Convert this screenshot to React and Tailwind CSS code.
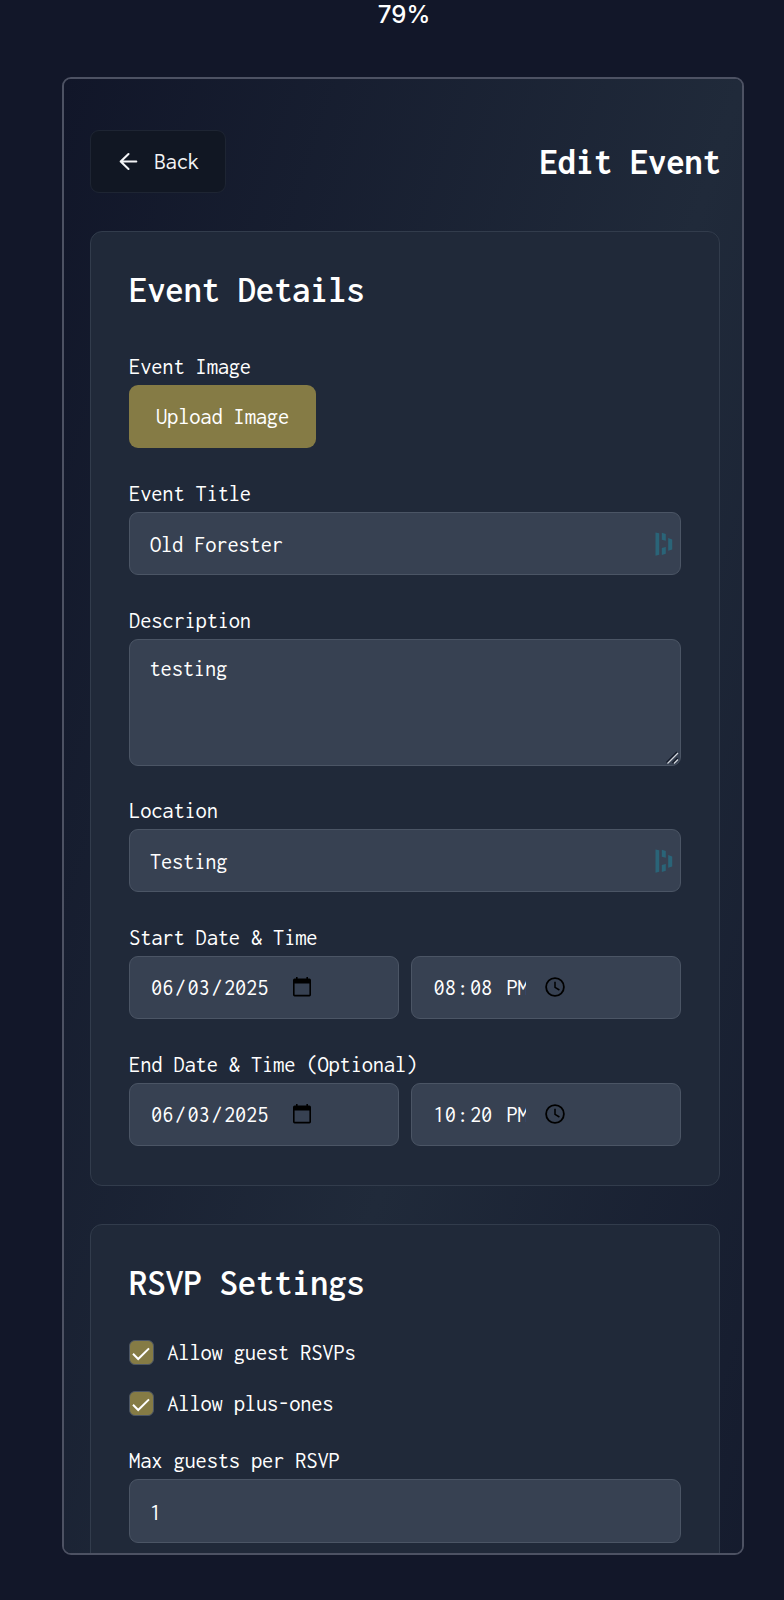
function DashMark() {
  return (
    <svg width="18" height="24" viewBox="0 0 18 24" fill="#2a6478" className="mt-px shrink-0">
      <path d="M.5 .5 4.2 1.2V22.8L.5 23.7Z" />
      <path d="M6.8 .8 10.8 2V8.8L6.8 7.8Z" />
      <path d="M6.8 16 10.8 15V21.8L6.8 23Z" />
      <path d="M13.2 6 17.2 7.4V17.4L13.2 18.8Z" />
    </svg>
  );
}

function CalendarIcon() {
  return (
    <svg width="18" height="20" viewBox="0 0 18 20" className="shrink-0">
      <path d="M1.6 1.6H16.4Q18 1.6 18 3.2V17.8Q18 19.4 16.4 19.4H1.6Q0 19.4 0 17.8V3.2Q0 1.6 1.6 1.6ZM1.6 6.6V17.8H16.4V6.6Z" fill="#000" fillRule="evenodd" />
      <path d="M3 0H4.6V2H3ZM13.4 0H15V2H13.4Z" fill="#000" />
    </svg>
  );
}

function ClockIcon() {
  return (
    <svg width="20" height="20" viewBox="0 0 20 20" fill="none" stroke="#000" className="shrink-0">
      <circle cx="10" cy="10" r="8.9" strokeWidth="1.8" />
      <path d="M10 4.8V10.4L14.4 13" strokeWidth="1.5" />
    </svg>
  );
}

const box = "rounded-[9px] border border-[#4b5565] bg-[#374152]";
const heading = "pl-[0.6px] pt-[39px] text-[36.8px] font-semibold leading-[38px] tracking-[-0.3px]";

function Field({ label, children }) {
  return (
    <div className="flex h-[127px] flex-col">
      <div className="h-[36.5px] shrink-0 pl-[0.6px] pt-[5.5px] font-[425] leading-[25px]">{label}</div>
      {children}
    </div>
  );
}

function TextBox({ value, mark }) {
  return (
    <div className={`${box} flex h-[63.5px] shrink-0 items-center justify-between pl-[20.4px] pr-[7px]`}>
      <span className="pt-[2.5px] leading-[25px]">{value}</span>
      {mark && <DashMark />}
    </div>
  );
}

function DateTime({ date, time }) {
  const [m, d, y] = date;
  const [h, min] = time;
  return (
    <div className="grid grid-cols-2 gap-[12.5px]">
      <div className={`${box} flex h-[63.5px] items-center pl-5`}>
        <div className="w-[143px] pt-px leading-[25px]">
          <span className="px-[1.6px]">{m}</span>/<span className="px-[1.6px]">{d}</span>/<span className="px-[1.6px]">{y}</span>
        </div>
        <CalendarIcon />
      </div>
      <div className={`${box} flex h-[63.5px] items-center pl-5`}>
        <div className="mr-[18.5px] w-[94px] overflow-hidden whitespace-pre pt-px leading-[25px]">
          <span className="px-[1.6px]">{h}</span>:<span className="px-[1.6px]">{min}</span>{" "}<span className="px-[1.6px]">PM</span>
        </div>
        <ClockIcon />
      </div>
    </div>
  );
}

function Check({ label }) {
  return (
    <div className="flex h-[50.7px] items-start gap-[13px]">
      <div className="flex size-[25.3px] shrink-0 items-center justify-center rounded-[6px] border border-[#4b5565] bg-[#857b45]">
        <svg width="18" height="14" viewBox="0 0 18 14" fill="none" stroke="#fff" strokeWidth="2" className="ml-[0.5px] mt-[3px]">
          <path d="M1 6.8 6.2 12 17 1.4" />
        </svg>
      </div>
      <span className="pl-[0.5px] font-[425] leading-[25px]">{label}</span>
    </div>
  );
}

export default function App() {
  return (
    <div className="h-[1600px] overflow-hidden bg-[#121729] font-['Inconsolata','Noto_Sans_Mono',monospace] text-[22.6px] tracking-[-0.22px] text-white">
      <div className="h-[77px] pl-6 text-center font-['Inter',sans-serif] text-[24px] font-medium leading-[29px] tracking-normal">79%</div>
      <div className="ml-[62px] h-[1478px] w-[682px] overflow-hidden rounded-[9px] border-2 border-[#4d5263]">
        <div className="h-[2085px] bg-linear-to-br from-[#111629] via-[#202a3a] to-[#111629] pl-[25.5px] pr-[22px] pt-[51px]">
          <div className="flex h-[101px] items-start justify-between">
            <div className="flex h-[63px] w-[136px] items-center rounded-[9px] border border-[#1e2533] bg-[#111723] pl-[25.5px]">
              <svg width="25" height="25" viewBox="0 0 24 24" fill="none" stroke="#f3f4f6" strokeWidth="2" strokeLinecap="round" strokeLinejoin="round">
                <path d="M19.5 12H4.5M12 4.8 4.5 12l7.5 7.2" />
              </svg>
              <span className="pl-[13.5px] leading-[25px] text-[#f3f4f6]">Back</span>
            </div>
            <div className="-mr-[0.5px] pt-[13px] text-[36.8px] font-bold leading-[38px] tracking-[-0.3px]">Edit Event</div>
          </div>

          <div className="h-[955px] rounded-[12px] border border-[#323c4c] bg-[#202939] px-[38px]">
            <div className={`${heading} h-[116px]`}>Event Details</div>
            <Field label="Event Image">
              <div className="flex h-[63.5px] w-[187px] items-center justify-center rounded-[9px] bg-[#857b45] pl-px pt-px font-[425]">Upload Image</div>
            </Field>
            <Field label="Event Title"><TextBox value="Old Forester" mark /></Field>
            <div className="h-[190px]">
              <Field label="Description">
                <div className={`${box} relative h-[127px] shrink-0 pl-5 pt-[16px] leading-[25px]`}>
                  testing
                  <svg width="13" height="13" viewBox="0 0 13 13" fill="none" className="absolute bottom-px right-px">
                    <path d="M.5 11.5 11 1M6.5 12 11.5 7" stroke="#111827" strokeWidth="1.5" />
                    <path d="M1.5 12.5 12 2M8 12.5 12 8.5" stroke="#d1d5db" strokeWidth="1.2" />
                  </svg>
                </div>
              </Field>
            </div>
            <Field label="Location"><TextBox value="Testing" mark /></Field>
            <Field label="Start Date &amp; Time"><DateTime date={["06", "03", "2025"]} time={["08", "08"]} /></Field>
            <Field label="End Date &amp; Time (Optional)"><DateTime date={["06", "03", "2025"]} time={["10", "20"]} /></Field>
          </div>

          <div className="mt-[38px] h-[760px] rounded-[12px] border border-[#323c4c] bg-[#202939] px-[38px]">
            <div className={`${heading} h-[115px]`}>RSVP Settings</div>
            <Check label="Allow guest RSVPs" />
            <Check label="Allow plus-ones" />
            <div className="pt-[1.3px]">
              <Field label="Max guests per RSVP"><TextBox value="1" /></Field>
            </div>
          </div>
        </div>
      </div>
    </div>
  );
}
